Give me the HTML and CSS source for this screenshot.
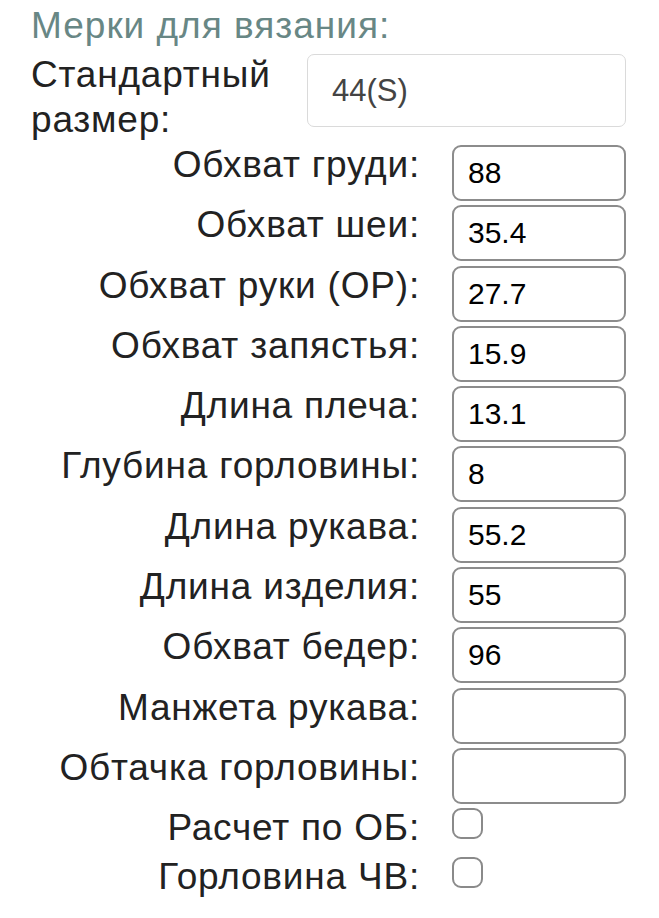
FILE: index.html
```html
<!DOCTYPE html>
<html lang="ru">
<head>
<meta charset="utf-8">
<title>Мерки для вязания</title>
<link rel="stylesheet" href="styles.css">
</head>
<body>
<form class="form">
  <h2 class="title">Мерки для вязания:</h2>
  <div class="size-row">
    <label class="size-label" for="size">Стандартный размер:</label>
    <select class="size-select" id="size">
      <option>44(S)</option>
    </select>
  </div>
  <div class="fields">
    <label class="lbl">Обхват груди:</label><input class="field" type="text" value="88">
    <label class="lbl">Обхват шеи:</label><input class="field" type="text" value="35.4">
    <label class="lbl">Обхват руки (ОР):</label><input class="field" type="text" value="27.7">
    <label class="lbl">Обхват запястья:</label><input class="field" type="text" value="15.9">
    <label class="lbl">Длина плеча:</label><input class="field" type="text" value="13.1">
    <label class="lbl">Глубина горловины:</label><input class="field" type="text" value="8">
    <label class="lbl">Длина рукава:</label><input class="field" type="text" value="55.2">
    <label class="lbl">Длина изделия:</label><input class="field" type="text" value="55">
    <label class="lbl">Обхват бедер:</label><input class="field" type="text" value="96">
    <label class="lbl">Манжета рукава:</label><input class="field" type="text" value="">
    <label class="lbl">Обтачка горловины:</label><input class="field" type="text" value="">
    <label class="lbl lbl-check">Расчет по ОБ:</label><div class="check-cell"><input class="check" type="checkbox"></div>
    <label class="lbl lbl-check">Горловина ЧВ:</label><div class="check-cell"><input class="check" type="checkbox"></div>
  </div>
</form>
</body>
</html>
```

FILE: styles.css
```css
html, body {
  margin: 0;
  padding: 0;
  background: #ffffff;
}

body {
  font-family: "Liberation Sans", Arial, sans-serif;
  color: #222222;
}

.form {
  padding: 4px 33px 0 31px;
}

.title {
  margin: 0;
  font-size: 37px;
  font-weight: normal;
  line-height: 44px;
  letter-spacing: 1px;
  color: #688785;
}

.size-row {
  display: flex;
  align-items: flex-start;
  margin-top: 4px;
}

.size-label {
  width: 262px;
  font-size: 37px;
  line-height: 45px;
  letter-spacing: 0.8px;
  color: #222;
}

.size-select {
  -webkit-appearance: none;
  appearance: none;
  flex: 1;
  margin: 2px 0 0 14px;
  height: 73px;
  border: 1.5px solid #dadada;
  border-radius: 7px;
  background: #fff;
  padding: 0 0 0 24px;
  font-family: "Liberation Sans", Arial, sans-serif;
  font-size: 31px;
  color: #444;
}

.fields {
  display: grid;
  grid-template-columns: 1fr 174px;
  column-gap: 32px;
  row-gap: 4.3px;
  align-items: start;
  margin-top: 3px;
}

.lbl {
  text-align: right;
  font-size: 37px;
  line-height: 44px;
  letter-spacing: 0.8px;
  margin-top: -2px;
  color: #222;
  white-space: nowrap;
}

.field {
  box-sizing: border-box;
  width: 174px;
  height: 56px;
  margin: 0;
  border: 2px solid #8c8c8c;
  border-radius: 9px;
  padding: 0 0 0 14px;
  font-family: "Liberation Sans", Arial, sans-serif;
  font-size: 30px;
  color: #000;
  background: #fff;
  outline: none;
}

.check-cell {
  height: 44px;
}

.check {
  -webkit-appearance: none;
  appearance: none;
  box-sizing: border-box;
  display: block;
  width: 31px;
  height: 31px;
  margin: 0;
  border: 2.5px solid #8a8a8a;
  border-radius: 9px;
  background: #fff;
}
```
